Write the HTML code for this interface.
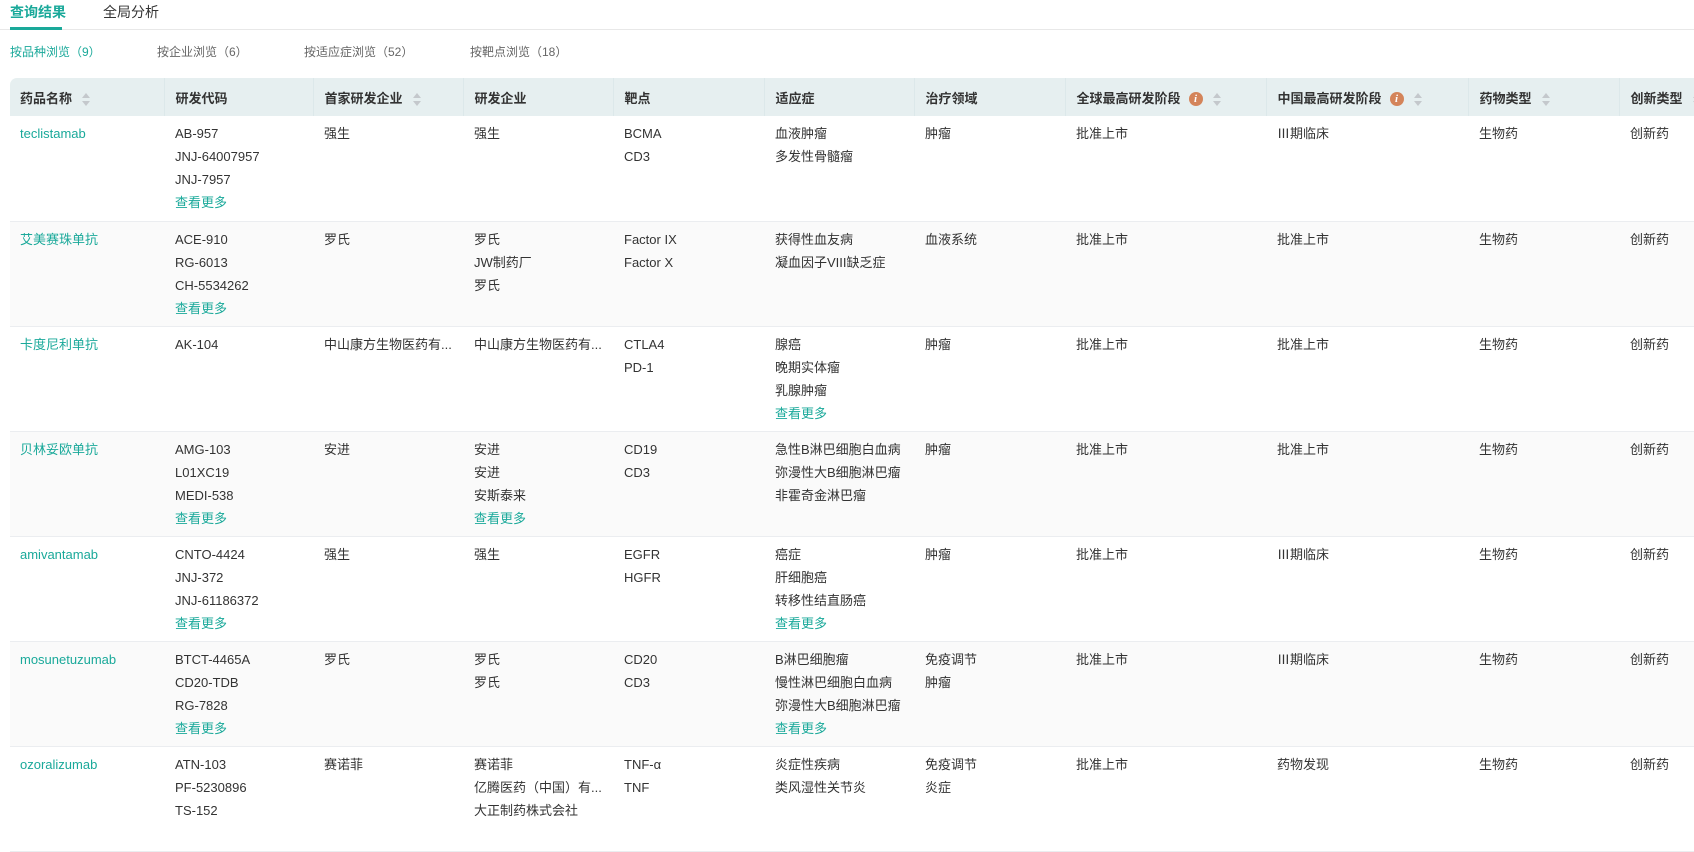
<!DOCTYPE html>
<html><head><meta charset="utf-8"><style>
*{margin:0;padding:0;box-sizing:border-box}
body{width:1694px;height:835px;overflow:hidden;background:#fff;font-family:"Liberation Sans","Noto Sans CJK SC",sans-serif;color:#333;font-size:13px;position:relative}
.tab{position:absolute;top:3px;font-size:14px;color:#333;line-height:18px}
.sub{position:absolute;top:44px;font-size:12px;color:#666;line-height:16px}
.ul{position:absolute;left:10px;top:27px;width:52px;height:3px;background:#1aa99a}
.line{position:absolute;left:0;top:29px;width:1694px;height:1px;background:#e8e8e8}
table{position:absolute;left:10px;top:78px;border-collapse:collapse;table-layout:fixed;width:1770px}
th{height:38px;background:#e6eff0;text-align:left;font-weight:bold;font-size:13px;color:#333;padding-left:11px;border-left:1px solid #dce8ea;white-space:nowrap}
th:first-child{border-left:none;border-top-left-radius:7px;padding-left:10px}
td{height:105px;vertical-align:top;padding:6px 0 0 11px;line-height:23px;border-bottom:1px solid #ebedf0;white-space:nowrap;overflow:hidden}
td:first-child{padding-left:10px}
tr.g td{background:#fafafa}
.n{color:#1aa99a}
.m{color:#1aa99a;display:block}
.s{display:inline-block;vertical-align:middle;margin-left:10px;width:9px;height:13px;position:relative}
.s:before{content:"";position:absolute;left:0;top:0;border:4.5px solid transparent;border-bottom:5px solid #c4c8cc;border-top:0}
.s:after{content:"";position:absolute;left:0;top:8px;border:4.5px solid transparent;border-top:5px solid #c4c8cc;border-bottom:0}
.i{display:inline-block;vertical-align:middle;margin-left:8px;width:14px;height:14px;border-radius:50%;background:#d4845a;color:#fff;font-size:11px;font-style:italic;font-weight:bold;text-align:center;line-height:14px;font-family:"Liberation Serif",serif}
</style></head><body>
<div class="tab" style="left:10px;color:#1aa99a;font-weight:bold">查询结果</div>
<div class="tab" style="left:103px">全局分析</div>
<div class="line"></div><div class="ul"></div>
<div class="sub" style="left:10px;color:#1aa99a">按品种浏览（9）</div>
<div class="sub" style="left:157px">按企业浏览（6）</div>
<div class="sub" style="left:304px">按适应症浏览（52）</div>
<div class="sub" style="left:470px">按靶点浏览（18）</div>
<table>
<colgroup><col style="width:154px"><col style="width:149px"><col style="width:150px"><col style="width:150px"><col style="width:151px"><col style="width:150px"><col style="width:151px"><col style="width:201px"><col style="width:202px"><col style="width:151px"><col style="width:211px"></colgroup>
<tr><th>药品名称<span class="s"></span></th><th>研发代码</th><th>首家研发企业<span class="s"></span></th><th>研发企业</th><th>靶点</th><th>适应症</th><th>治疗领域</th><th>全球最高研发阶段<span class="i">i</span><span class="s"></span></th><th>中国最高研发阶段<span class="i">i</span><span class="s"></span></th><th>药物类型<span class="s"></span></th><th>创新类型<span class="s"></span></th></tr>
<tr><td class="n">teclistamab</td><td>AB-957<br>JNJ-64007957<br>JNJ-7957<span class="m">查看更多</span></td><td>强生</td><td>强生</td><td>BCMA<br>CD3</td><td>血液肿瘤<br>多发性骨髓瘤</td><td>肿瘤</td><td>批准上市</td><td>Ⅲ期临床</td><td>生物药</td><td>创新药</td></tr>
<tr class="g"><td class="n">艾美赛珠单抗</td><td>ACE-910<br>RG-6013<br>CH-5534262<span class="m">查看更多</span></td><td>罗氏</td><td>罗氏<br>JW制药厂<br>罗氏</td><td>Factor IX<br>Factor X</td><td>获得性血友病<br>凝血因子VIII缺乏症</td><td>血液系统</td><td>批准上市</td><td>批准上市</td><td>生物药</td><td>创新药</td></tr>
<tr><td class="n">卡度尼利单抗</td><td>AK-104</td><td>中山康方生物医药有...</td><td>中山康方生物医药有...</td><td>CTLA4<br>PD-1</td><td>腺癌<br>晚期实体瘤<br>乳腺肿瘤<span class="m">查看更多</span></td><td>肿瘤</td><td>批准上市</td><td>批准上市</td><td>生物药</td><td>创新药</td></tr>
<tr class="g"><td class="n">贝林妥欧单抗</td><td>AMG-103<br>L01XC19<br>MEDI-538<span class="m">查看更多</span></td><td>安进</td><td>安进<br>安进<br>安斯泰来<span class="m">查看更多</span></td><td>CD19<br>CD3</td><td>急性B淋巴细胞白血病<br>弥漫性大B细胞淋巴瘤<br>非霍奇金淋巴瘤</td><td>肿瘤</td><td>批准上市</td><td>批准上市</td><td>生物药</td><td>创新药</td></tr>
<tr><td class="n">amivantamab</td><td>CNTO-4424<br>JNJ-372<br>JNJ-61186372<span class="m">查看更多</span></td><td>强生</td><td>强生</td><td>EGFR<br>HGFR</td><td>癌症<br>肝细胞癌<br>转移性结直肠癌<span class="m">查看更多</span></td><td>肿瘤</td><td>批准上市</td><td>Ⅲ期临床</td><td>生物药</td><td>创新药</td></tr>
<tr class="g"><td class="n">mosunetuzumab</td><td>BTCT-4465A<br>CD20-TDB<br>RG-7828<span class="m">查看更多</span></td><td>罗氏</td><td>罗氏<br>罗氏</td><td>CD20<br>CD3</td><td>B淋巴细胞瘤<br>慢性淋巴细胞白血病<br>弥漫性大B细胞淋巴瘤<span class="m">查看更多</span></td><td>免疫调节<br>肿瘤</td><td>批准上市</td><td>Ⅲ期临床</td><td>生物药</td><td>创新药</td></tr>
<tr><td class="n">ozoralizumab</td><td>ATN-103<br>PF-5230896<br>TS-152</td><td>赛诺菲</td><td>赛诺菲<br>亿腾医药（中国）有...<br>大正制药株式会社</td><td>TNF-α<br>TNF</td><td>炎症性疾病<br>类风湿性关节炎</td><td>免疫调节<br>炎症</td><td>批准上市</td><td>药物发现</td><td>生物药</td><td>创新药</td></tr>
</table>
</body></html>
